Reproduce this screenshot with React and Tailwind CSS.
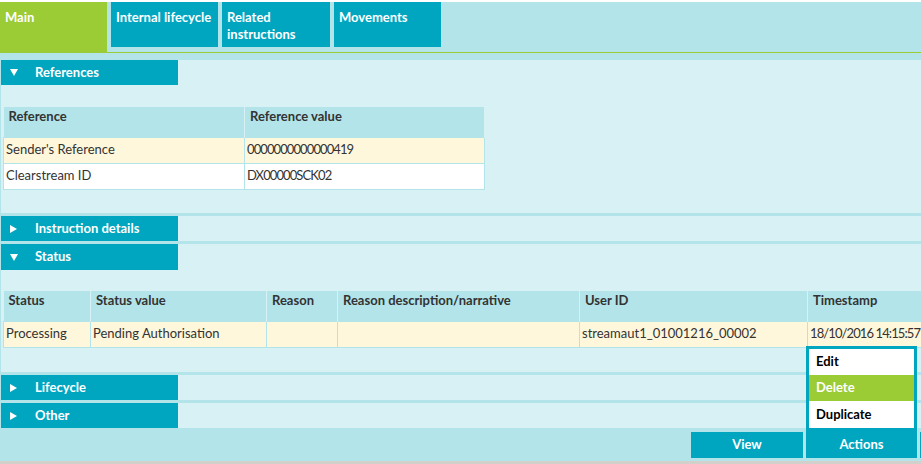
import React from 'react';

const font = { fontFamily: 'Lato, "Liberation Sans", sans-serif' };

function Tri({ open }) {
  return open ? (
    <svg width="8" height="7" viewBox="0 0 8 7" className="shrink-0">
      <path d="M0 0 H8 L4 7 Z" fill="#fff" />
    </svg>
  ) : (
    <svg width="7" height="8" viewBox="0 0 7 8" className="shrink-0">
      <path d="M0 0 L7 4 L0 8 Z" fill="#fff" />
    </svg>
  );
}

function SectionHeader({ title, open, tall }) {
  return (
    <div className={`flex ${tall ? 'h-[26px]' : 'h-[25px]'} bg-[#d8f1f5]`}>
      <div className="flex w-[177px] items-center bg-[#00a6bf] pl-[9px] text-[13px] font-bold text-white">
        <span className="flex w-[25px] items-center">
          <Tri open={open} />
        </span>
        {title}
      </div>
    </div>
  );
}

function Th({ children, w }) {
  return (
    <th
      className={`${w} h-[30px] border-r border-[#d8f1f5] bg-[#b2e4ea] px-[5px] text-left align-top text-[13px] font-bold text-[#333]`}
    >
      {children}
    </th>
  );
}

function Td({ children, tight }) {
  return (
    <td
      className={`h-[26px] border border-[#b2e4ea] px-[2px] text-[13px] whitespace-nowrap text-[#333] ${
        tight ? 'tracking-[-0.9px]' : ''
      }`}
    >
      {children}
    </td>
  );
}

export default function App() {
  return (
    <div style={font} className="h-[464px] w-[921px] overflow-hidden bg-white">
      {/* tabs */}
      <div className="mt-[2px] flex h-[50px] gap-[4px] bg-[#b2e4ea] text-[13px] font-bold leading-[17px] text-white">
        <div className="w-[107px] bg-[#9bcb35] px-[5px] pt-[7px]">Main</div>
        <div className="h-[45px] w-[107px] bg-[#00a6bf] px-[5px] pt-[7px]">Internal lifecycle</div>
        <div className="h-[45px] w-[108px] bg-[#00a6bf] px-[5px] pt-[7px]">
          Related
          <br />
          instructions
        </div>
        <div className="h-[45px] w-[107px] bg-[#00a6bf] px-[5px] pt-[7px]">Movements</div>
      </div>
      <div className="h-px bg-[#9bcb35]" />
      <div className="h-[7px] bg-[#b2e4ea]" />

      <div className="border-l border-[#b2e4ea] bg-[#b2e4ea]">
        {/* References */}
        <SectionHeader title="References" open />
        <div className="h-[128px] bg-[#d8f1f5] pt-[22px] pl-[2px]">
          <table className="border-collapse">
            <thead>
              <tr>
                <Th w="w-[241px]">Reference</Th>
                <Th w="w-[240px]">Reference value</Th>
              </tr>
            </thead>
            <tbody>
              <tr className="bg-[#fff7db]">
                <Td>Sender's Reference</Td>
                <Td tight>0000000000000419</Td>
              </tr>
              <tr className="bg-white">
                <Td>Clearstream ID</Td>
                <Td tight>DX00000SCK02</Td>
              </tr>
            </tbody>
          </table>
        </div>
        <div className="h-[3px]" />
        <SectionHeader title="Instruction details" />
        <div className="h-[3px]" />

        {/* Status */}
        <SectionHeader title="Status" open tall />
        <div className="h-[102px] overflow-hidden bg-[#d8f1f5] pt-[21px] pl-[2px]">
          <table className="w-[1060px] table-fixed border-collapse">
            <thead>
              <tr>
                <Th w="w-[87px]">Status</Th>
                <Th w="w-[176px]">Status value</Th>
                <Th w="w-[71px]">Reason</Th>
                <Th w="w-[242px]">Reason description/narrative</Th>
                <Th w="w-[228px]">User ID</Th>
                <Th w="w-[256px]">Timestamp</Th>
              </tr>
            </thead>
            <tbody>
              <tr className="bg-[#fff7db]">
                <Td>Processing</Td>
                <Td>Pending Authorisation</Td>
                <Td></Td>
                <Td></Td>
                <Td>streamaut1_01001216_00002</Td>
                <Td tight>18/10/2016 14:15:57</Td>
              </tr>
            </tbody>
          </table>
        </div>
        <div className="h-[3px]" />
        <SectionHeader title="Lifecycle" />
        <div className="h-[3px]" />
        <SectionHeader title="Other" />

        {/* footer */}
        <div className="flex h-[33px] items-start gap-[3px] pt-[4px] pl-[690px] text-[13px] font-bold text-white">
          <button className="flex h-[26px] w-[112px] shrink-0 items-center justify-center bg-[#00a6bf]">View</button>
          <div className="relative shrink-0">
            <div className="absolute bottom-full left-0 right-0 bg-[#00a6bf] px-[3px] pt-[3px] pb-[4px]">
              <div className="bg-white text-[13px] font-bold">
                <div className="flex h-[26px] items-center pl-[7px] text-black">Edit</div>
                <div className="flex h-[26px] items-center bg-[#9bcb35] pl-[7px] text-white">Delete</div>
                <div className="flex h-[27px] items-center pl-[7px] text-black">Duplicate</div>
              </div>
            </div>
            <button className="flex h-[26px] w-[111px] items-center justify-center bg-[#00a6bf]">Actions</button>
          </div>
          <div className="h-[26px] w-[20px] shrink-0 bg-[#00a6bf]" />
        </div>
      </div>
      <div className="h-[3px] bg-[#d3d0cb]" />
    </div>
  );
}
